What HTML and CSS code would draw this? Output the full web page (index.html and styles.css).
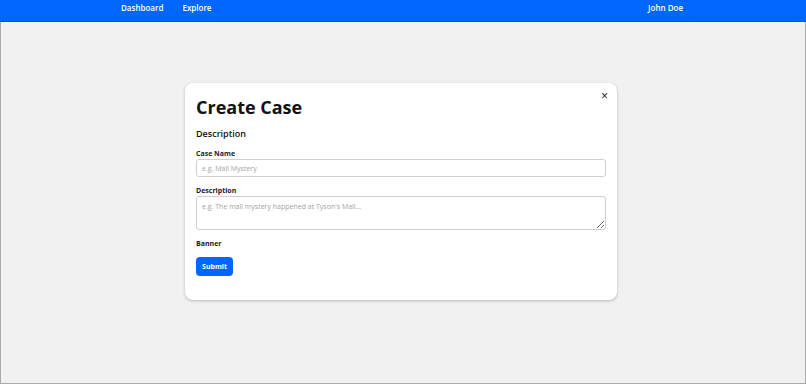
FILE: index.html
```html
<!DOCTYPE html>
<html lang="en">
<head>
<meta charset="UTF-8">
<title>Create Case</title>
<meta name="viewport" content="width=device-width, initial-scale=1.0">
<link rel="stylesheet" href="styles.css">
</head>
<body>

<div class="navbar">
    <div class="nav-links">
        <a href="#">Dashboard</a>
        <a href="#">Explore</a>
    </div>
    <a href="#" class="user">John Doe</a>
</div>

<div class="page">
    <div class="modal">
        <button class="close-btn">&times;</button>
        <h1>Create Case</h1>
        <h2>Description</h2>
        <form>
            <label for="caseName">Case Name</label>
            <input type="text" id="caseName" placeholder="e.g. Mall Mystery">
            <label for="caseDesc">Description</label>
            <textarea id="caseDesc" placeholder="e.g. The mall mystery happened at Tyson's Mall..."></textarea>
            <label>Banner</label>
            <button type="button" class="submit-btn">Submit</button>
        </form>
    </div>
</div>

</body>
</html>
```

FILE: styles.css
```css
html, body { height: 100%; }
body { margin:0; font-family: 'Open Sans', 'Noto Sans', sans-serif; background:#f1f1f1; color:#111; display:flex; flex-direction:column; }

.navbar { background:#0066ff; height:21px; border-bottom:1px solid #1a55c0; display:flex; align-items:center; justify-content:space-between; padding:0 123px 0 121px; flex-shrink:0; }
.nav-links { display:flex; gap:19px; }
.navbar a { color:#fff; text-decoration:none; font-size:8px; font-weight:600; margin-top:-6px; }

.page { flex:1; border:1px solid #a9a9a9; border-top:none; display:flex; justify-content:center; align-items:flex-start; padding-top:61px; }

.modal { position:relative; background:#fff; width:410px; padding:10px 11px 24px; border-radius:8px; box-shadow:0 1px 3px rgba(0,0,0,0.25); margin-right:4px; }
.modal h1 { margin:1px 0 0; font-size:18px; font-weight:700; line-height:26px; }
.modal h2 { margin:7px 0 0; font-size:9px; font-weight:600; line-height:14px; }

.close-btn { position:absolute; top:7px; right:9px; background:none; border:none; font-size:12px; line-height:12px; padding:0; color:#222; cursor:pointer; }

form { display:flex; flex-direction:column; margin-top:8px; }
label { font-size:7px; font-weight:700; color:#1a1a2a; line-height:10px; }
input[type=text], textarea { font-family:inherit; font-size:7px; border:1px solid #cfcfcf; border-radius:3px; padding:0 5px; margin:0 0 9px; box-sizing:border-box; width:100%; color:#333; }
input[type=text] { height:18px; }
textarea { height:34px; padding-top:5px; resize:vertical; }
::placeholder { color:#a4a4a4; }

.submit-btn { align-self:flex-start; margin-top:8px; background:#0066ff; color:#fff; border:none; border-radius:4px; font-family:inherit; font-size:7px; font-weight:700; width:37px; height:19px; padding:0; cursor:pointer; }
.submit-btn:hover { background:#0052cc; }
```
